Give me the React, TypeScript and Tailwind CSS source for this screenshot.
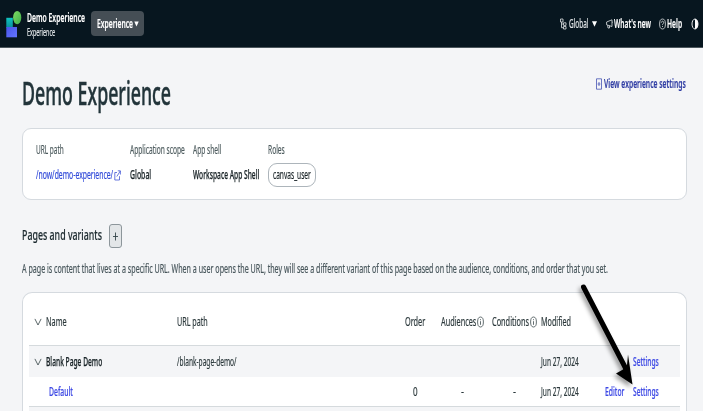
import { useLayoutEffect, useRef, type ReactNode } from "react";

// One line of condensed text that fills the width given by its class.
function Fit({ className, children }: { className: string; children: ReactNode }) {
  const box = useRef<HTMLSpanElement>(null);
  const text = useRef<HTMLSpanElement>(null);
  useLayoutEffect(() => {
    if (box.current && text.current) {
      const ratio = box.current.getBoundingClientRect().width / text.current.offsetWidth;
      text.current.style.transform = `scaleX(${ratio})`;
    }
  }, []);
  return (
    <span ref={box} className={`block shrink-0 whitespace-nowrap ${className}`}>
      <span ref={text} className="inline-block origin-left">
        {children}
      </span>
    </span>
  );
}

function Logo() {
  return (
    <svg className="h-[28px] w-[16px] shrink-0" viewBox="0 0 16 28">
      <defs>
        <linearGradient id="teal" x1="0" y1="0" x2="0" y2="1">
          <stop offset="0" stopColor="#0fc4c0" />
          <stop offset="1" stopColor="#0a8f9c" />
        </linearGradient>
        <linearGradient id="blue" x1="0" y1="0" x2="1" y2="1">
          <stop offset="0" stopColor="#4a55ea" />
          <stop offset="1" stopColor="#6274ff" />
        </linearGradient>
        <linearGradient id="green" x1="0" y1="0" x2="1" y2="1">
          <stop offset="0" stopColor="#7fdc62" />
          <stop offset="1" stopColor="#3fae4a" />
        </linearGradient>
      </defs>
      <rect x="0.3" y="7.8" width="6.5" height="10" fill="url(#teal)" />
      <rect x="0.3" y="17" width="10.7" height="10.3" fill="url(#blue)" />
      <ellipse cx="11.2" cy="7.6" rx="4.1" ry="6.7" fill="url(#green)" />
    </svg>
  );
}

function Chevron() {
  return (
    <svg className="h-[8px] w-[8px]" viewBox="0 0 8 8" fill="none" stroke="#4a5759" strokeWidth="0.9">
      <path d="M0.9 0.9 4 7 7.1 0.9" />
    </svg>
  );
}

function Info() {
  return (
    <svg className="h-[12px] w-[7px] shrink-0" viewBox="0 0 7 12" fill="none" stroke="#3c4a4d" strokeWidth="0.8">
      <ellipse cx="3.5" cy="6" rx="2.9" ry="5" />
      <path d="M3.5 5.2V8.8M3.5 3.2V4.2" />
    </svg>
  );
}

const columns =
  "grid grid-cols-[13px_130px_228px_36px_51px_49px_64px_28px_30px] items-center";

export default function App() {
  return (
    <div className="relative h-[411px] w-[703px] overflow-hidden bg-[#f4f5f7] text-[12.5px] leading-[18px] text-[#2b383b] [-webkit-text-stroke:0.2px] [font-family:'Noto_Sans',sans-serif]">
      <header className="flex h-[48px] items-center border-b border-[#4c575d] bg-[#07161f] pl-[6px] text-white">
        <Logo />
        <div className="ml-[5px] w-[64px] pt-[3px] text-[11px] leading-[15px]">
          <Fit className="w-[58px] text-[12px] font-semibold">Demo Experience</Fit>
          <Fit className="w-[28px] text-[10.5px] text-[#dfe3e5]">Experience</Fit>
        </div>
        <button className="flex h-[25px] w-[53px] items-center rounded-[4px] bg-[#454e55] pl-[5.5px]">
          <Fit className="w-[36px] text-left font-semibold">Experience</Fit>
          <svg className="ml-[1px] h-[6px] w-[5px]" viewBox="0 0 5 6">
            <path d="M0.3 0.5H4.7L2.5 5.5Z" fill="white" />
          </svg>
        </button>
        <div className="ml-[416px] flex items-center">
          <svg className="h-[12px] w-[7px]" viewBox="0 0 7 12" fill="none" stroke="#dfe3e5" strokeWidth="0.8">
            <path d="M0.5 1H3V4H0.5ZM1.5 4V9.7H3.4M1.5 6H3.4M3.5 4.8H6V7.4H3.5ZM3.5 8.5H6V11H3.5Z" />
          </svg>
          <Fit className="ml-[2px] w-[19.5px] text-[#e3e7e9]">Global</Fit>
          <svg className="ml-[3px] h-[6px] w-[5px]" viewBox="0 0 5 6">
            <path d="M0 0.3H5L2.5 5.8Z" fill="white" />
          </svg>
          <svg className="ml-[9.5px] h-[10px] w-[7px]" viewBox="0 0 7 10" fill="none" stroke="#dfe3e5" strokeWidth="0.8">
            <path d="M0.6 3 6 0.8V7.5L0.6 5.8ZM1.6 6.2 2 9H3.5V6.7M6 3.2H6.8" />
          </svg>
          <Fit className="ml-[1px] w-[37px] font-semibold">What's new</Fit>
          <svg className="ml-[8px] h-[12px] w-[7px]" viewBox="0 0 7 12" fill="none" stroke="#dfe3e5" strokeWidth="0.8">
            <ellipse cx="3.5" cy="6" rx="2.9" ry="5" />
            <path d="M2.3 4.7C2.4 2.7 4.7 2.8 4.7 4.5 4.7 5.7 3.5 5.6 3.5 7.1M3.5 8V9" />
          </svg>
          <Fit className="ml-[1px] w-[15px] font-semibold">Help</Fit>
          <svg className="ml-[9px] h-[12px] w-[8px]" viewBox="0 0 8 12">
            <ellipse cx="4" cy="6" rx="3" ry="5" fill="none" stroke="white" strokeWidth="0.9" />
            <path d="M4 1C8 1 8 11 4 11Z" fill="white" />
          </svg>
        </div>
      </header>

      <main className="pl-[22px]">
        <div className="flex h-[80px] items-start pt-[22px]">
          <h1>
            <Fit className="w-[149px] text-[32px] font-medium leading-[45px] text-[#22343a] [-webkit-text-stroke:0.5px]">Demo Experience</Fit>
          </h1>
          <a className="ml-[425px] mt-[4.5px] flex items-center text-[#2f3da3]">
            <svg className="h-[12px] w-[6px]" viewBox="0 0 6 12" fill="none" stroke="#4654b4" strokeWidth="0.8">
              <path d="M0.5 0.8H5.5V11.2H0.5ZM1.6 6H4.4M3 4V8" />
            </svg>
            <Fit className="ml-[2px] w-[82px] font-semibold">View experience settings</Fit>
          </a>
        </div>

        <section className="grid h-[72px] w-[665px] grid-cols-[94px_63.5px_75px_60px] grid-rows-[18px_26px] content-start gap-y-[3px] rounded-[9px] border border-[#d5dadf] bg-white pl-[12.5px] pt-[12px]">
          <Fit className="w-[28px] text-[#4c5a5d]">URL path</Fit>
          <Fit className="w-[54.5px] text-[#4c5a5d]">Application scope</Fit>
          <Fit className="w-[28.5px] text-[#4c5a5d]">App shell</Fit>
          <Fit className="w-[17px] text-[#4c5a5d]">Roles</Fit>
          <a className="flex items-center text-[#2f48d8]">
            <Fit className="w-[77px]">/now/demo-experience/</Fit>
            <svg className="ml-[1px] h-[11px] w-[7px]" viewBox="0 0 7 11" fill="none" stroke="#4257d6" strokeWidth="0.8">
              <path d="M3 2.5H0.8V10H5.5V6.2M3.8 0.8H6.4V4.5M6.3 1 2.8 6.5" />
            </svg>
          </a>
          <Fit className="w-[21px] self-center font-medium text-[#162024] [-webkit-text-stroke:0.25px]">Global</Fit>
          <Fit className="w-[66.5px] self-center font-medium text-[#162024] [-webkit-text-stroke:0.25px]">Workspace App Shell</Fit>
          <span className="flex h-[24px] w-[48px] items-center self-center rounded-[9px] border border-[#adb5bb] pl-[4px]">
            <Fit className="w-[38px] text-[#162024]">canvas_user</Fit>
          </span>
        </section>

        <div className="mt-[24px] flex h-[24px] items-start">
          <h2>
            <Fit className="w-[80px] text-[15px] font-medium leading-[20px] text-[#1d2b30] [-webkit-text-stroke:0.2px]">Pages and variants</Fit>
          </h2>
          <button className="ml-[7px] flex h-[24px] w-[13px] items-center justify-center rounded-[3px] border border-[#8d969b] bg-[#e3e6e8]">
            <svg className="h-[9px] w-[5px]" viewBox="0 0 5 9" stroke="#35454a" strokeWidth="0.9">
              <path d="M2.5 0.5V8.5M0 4.5H5" />
            </svg>
          </button>
        </div>

        <p className="mt-[12px] text-[#46555a]">
          <Fit className="w-[586px]">
            A page is content that lives at a specific URL. When a user opens the URL, they will see a different variant of this page based on the audience, conditions, and order that you set.
          </Fit>
        </p>

        <section className="mt-[14px] h-[140px] w-[665px] rounded-t-[10px] border border-b-0 border-[#d5dadf] bg-white px-[6px]">
          <div className={`${columns} h-[53px] border-b border-[#d5dadd] pl-[5px] pt-[5px]`}>
            <span className="-ml-[0.5px]"><Chevron /></span>
            <Fit className="-ml-[1px] w-[20.5px]">Name</Fit>
            <Fit className="-ml-[0.5px] w-[31px]">URL path</Fit>
            <Fit className="w-[20.5px]">Order</Fit>
            <span className="flex items-center">
              <Fit className="w-[35px]">Audiences</Fit>
              <span className="ml-[1px]"><Info /></span>
            </span>
            <span className="flex items-center">
              <Fit className="w-[37px]">Conditions</Fit>
              <span className="ml-[1px]"><Info /></span>
            </span>
            <Fit className="w-[30px]">Modified</Fit>
          </div>
          <div className={`${columns} h-[31px] bg-[#f4f5f7] pl-[5px]`}>
            <span className="-ml-[0.5px]"><Chevron /></span>
            <Fit className="-ml-[1px] w-[56.5px] font-medium text-[#162024] [-webkit-text-stroke:0.25px]">Blank Page Demo</Fit>
            <Fit className="-ml-[0.5px] w-[59.5px]">/blank-page-demo/</Fit>
            <span />
            <span />
            <span />
            <Fit className="w-[38px]">Jun 27, 2024</Fit>
            <span />
            <Fit className="w-[26px] font-medium text-[#3d49e4]">Settings</Fit>
          </div>
          <div className={`${columns} h-[30px] border-b border-[#d5dadd] pl-[5px]`}>
            <span />
            <Fit className="ml-[2px] w-[24px] font-medium text-[#3d49e4]">Default</Fit>
            <span />
            <Fit className="ml-[8px] w-[4.5px]">0</Fit>
            <Fit className="ml-[20px] w-[3px]">-</Fit>
            <Fit className="ml-[21px] w-[3px]">-</Fit>
            <Fit className="w-[38px]">Jun 27, 2024</Fit>
            <Fit className="w-[19.5px] font-medium text-[#3d49e4]">Editor</Fit>
            <Fit className="w-[26px] font-medium text-[#3d49e4]">Settings</Fit>
          </div>
          <div className="h-[5px] bg-[#f4f5f7]" />
        </section>
      </main>

      <svg className="pointer-events-none absolute left-[570px] top-[275px] h-[125px] w-[80px] drop-shadow-[-2px_3px_2px_rgba(0,0,0,0.4)]" viewBox="570 275 80 125">
        <path d="M583.5 287 626 369" stroke="#000" strokeWidth="5" strokeLinecap="round" />
        <path d="M632.5 384.5 616 373.5 623 369.5 627 365 628 354.5Z" fill="#000" />
      </svg>
    </div>
  );
}
